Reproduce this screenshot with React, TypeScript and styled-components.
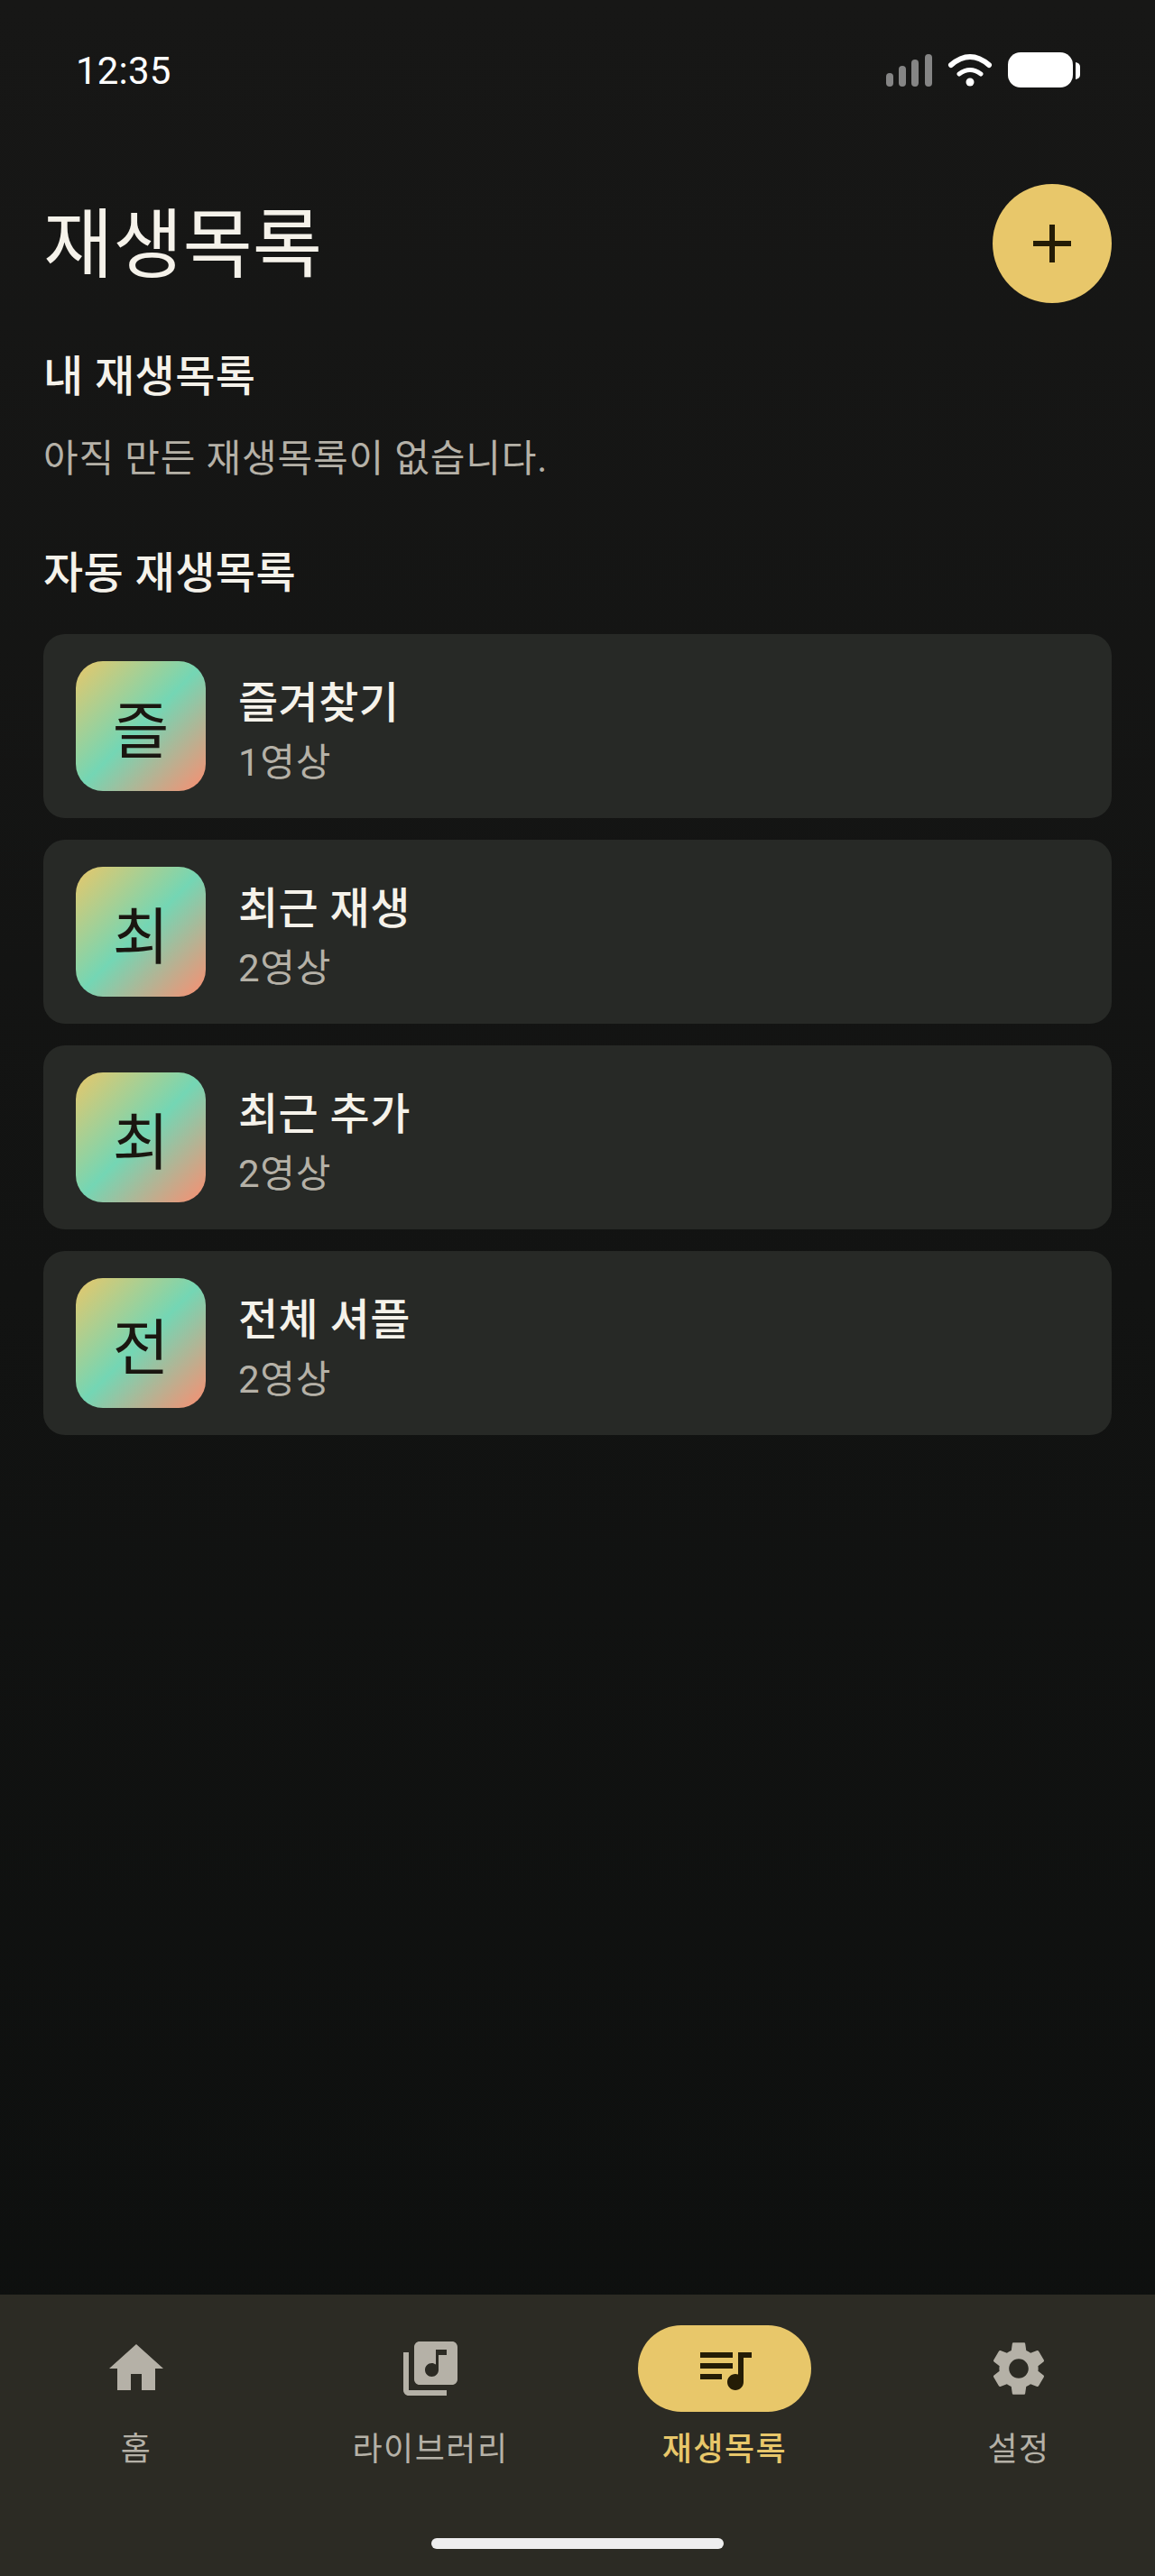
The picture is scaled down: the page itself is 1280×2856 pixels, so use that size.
import React from 'react'
import styled, { createGlobalStyle } from 'styled-components'

const GlobalStyle = createGlobalStyle`
    html, body {
        margin: 0;
        padding: 0;
        background: #111211;
    }
    body {
        font-family: Roboto, "Noto Sans CJK KR", sans-serif;
    }
`

const Page = styled.div`
    display: flex;
    flex-direction: column;
    width: 1280px;
    height: 2856px;
    background: linear-gradient(180deg, #171716 0%, #0d0f0e 100%);
    color: #f5f2ea;
`

const StatusBar = styled.div`
    display: flex;
    align-items: center;
    justify-content: space-between;
    height: 156px;
    padding: 0 84px;
    box-sizing: border-box;
`

const Time = styled.span`
    font-size: 42px;
    color: #ffffff;
    letter-spacing: 0.2px;
`

const StatusIcons = styled.svg`
    display: block;
    margin-right: -1px;
`

const Main = styled.main`
    flex: 1;
    padding: 48px 48px 0;
`

const Header = styled.div`
    display: flex;
    align-items: center;
    justify-content: space-between;
    height: 132px;
`

const Title = styled.h1`
    margin: 0;
    padding-top: 6px;
    font-size: 84px;
    font-weight: 400;
    line-height: 1;
`

const AddButton = styled.button`
    display: flex;
    align-items: center;
    justify-content: center;
    width: 132px;
    height: 132px;
    padding: 0;
    border: 0;
    border-radius: 50%;
    background: #e8c76a;
    color: #241c06;
`

const SectionTitle = styled.h2`
    margin: 0;
    font-size: 48px;
    font-weight: 500;
    line-height: 72px;
    letter-spacing: 0.45px;
`

const MineTitle = styled(SectionTitle)`
    margin-top: 46px;
`

const AutoTitle = styled(SectionTitle)`
    margin-top: 61px;
`

const Empty = styled.p`
    margin: 25px 0 0;
    font-size: 42px;
    line-height: 60px;
    letter-spacing: 0.85px;
    color: #b5b1a7;
`

const List = styled.div`
    display: flex;
    flex-direction: column;
    gap: 24px;
    margin-top: 31px;
`

const Card = styled.div`
    display: flex;
    align-items: center;
    gap: 36px;
    height: 204px;
    padding: 0 36px;
    border-radius: 24px;
    background: #272926;
`

const Avatar = styled.div`
    display: flex;
    align-items: center;
    justify-content: center;
    width: 144px;
    height: 144px;
    border-radius: 30px;
    background: linear-gradient(135deg, #e8c76a 0%, #74d6b4 50%, #fb8d70 100%);
    color: #1a1610;
    font-size: 68px;
`

const CardText = styled.div`
    display: flex;
    flex-direction: column;
    gap: 6px;
    padding-top: 14px;
`

const CardTitle = styled.div`
    font-size: 48px;
    font-weight: 500;
    line-height: 62px;
    letter-spacing: 0.45px;
`

const CardSub = styled.div`
    font-size: 42px;
    line-height: 58px;
    letter-spacing: 0.75px;
    color: #b5b1a7;
`

const BottomNav = styled.nav`
    position: relative;
    display: flex;
    justify-content: space-between;
    height: 312px;
    padding: 34px 55px 0;
    box-sizing: border-box;
    background: #2c2b24;
`

const Tab = styled.div`
    display: flex;
    flex-direction: column;
    align-items: center;
    width: 192px;
`

const IconPill = styled.div<{ $active?: boolean }>`
    display: flex;
    align-items: center;
    justify-content: center;
    width: 192px;
    height: 96px;
    border-radius: 48px;
    background: ${p => (p.$active ? '#e8c76a' : 'transparent')};
    color: ${p => (p.$active ? '#241c06' : '#b5b1a7')};
`

const TabLabel = styled.span<{ $active?: boolean }>`
    margin-top: 16px;
    font-size: 36px;
    line-height: 52px;
    letter-spacing: 1.5px;
    white-space: nowrap;
    font-weight: ${p => (p.$active ? 500 : 400)};
    color: ${p => (p.$active ? '#e8c76a' : '#b5b1a7')};
`

const HomeBar = styled.div`
    position: absolute;
    left: 478px;
    bottom: 30px;
    width: 324px;
    height: 12px;
    border-radius: 6px;
    background: #eeeeee;
`

const paths = {
    plus: 'M19 13h-6v6h-2v-6H5v-2h6V5h2v6h6v2z',
    home: 'M10 20v-6h4v6h5v-8h3L12 3 2 12h3v8z',
    library: 'M20 2H8c-1.1 0-2 .9-2 2v12c0 1.1.9 2 2 2h12c1.1 0 2-.9 2-2V4c0-1.1-.9-2-2-2zm-2 5h-3v5.5c0 1.38-1.12 2.5-2.5 2.5S10 13.88 10 12.5s1.12-2.5 2.5-2.5c.57 0 1.08.19 1.5.51V5h4v2zM4 6H2v14c0 1.1.9 2 2 2h14v-2H4V6z',
    queue: 'M15 6H3v2h12V6zm0 4H3v2h12v-2zM3 16h8v-2H3v2zM17 6v8.18c-.31-.11-.65-.18-1-.18-1.66 0-3 1.34-3 3s1.34 3 3 3 3-1.34 3-3V8h3V6h-5z',
    settings: 'M19.14 12.94c.04-.3.06-.61.06-.94 0-.32-.02-.64-.07-.94l2.03-1.58c.18-.14.23-.41.12-.61l-1.92-3.32c-.12-.22-.37-.29-.59-.22l-2.39.96c-.5-.38-1.03-.7-1.62-.94l-.36-2.54c-.04-.24-.24-.41-.48-.41h-3.84c-.24 0-.43.17-.47.41l-.36 2.54c-.59.24-1.13.57-1.62.94l-2.39-.96c-.22-.08-.47 0-.59.22L2.74 8.87c-.12.21-.08.47.12.61l2.03 1.58c-.05.3-.09.63-.09.94s.02.64.07.94l-2.03 1.58c-.18.14-.23.41-.12.61l1.92 3.32c.12.22.37.29.59.22l2.39-.96c.5.38 1.03.7 1.62.94l.36 2.54c.05.24.24.41.48.41h3.84c.24 0 .44-.17.47-.41l.36-2.54c.59-.24 1.13-.56 1.62-.94l2.39.96c.22.08.47 0 .59-.22l1.92-3.32c.12-.22.07-.47-.12-.61l-2.01-1.58zM12 15.6c-1.98 0-3.6-1.62-3.6-3.6s1.62-3.6 3.6-3.6 3.6 1.62 3.6 3.6-1.62 3.6-3.6 3.6z',
}

const Icon = ({ d, size = 72 }: { d: string, size?: number }) => (
    <svg width={size} height={size} viewBox="0 0 24 24" fill="currentColor">
        <path d={d} />
    </svg>
)

const playlists = [
    { name: '즐겨찾기', initial: '즐', count: '1영상' },
    { name: '최근 재생', initial: '최', count: '2영상' },
    { name: '최근 추가', initial: '최', count: '2영상' },
    { name: '전체 셔플', initial: '전', count: '2영상' },
]

const tabs = [
    { label: '홈', icon: paths.home },
    { label: '라이브러리', icon: paths.library },
    { label: '재생목록', icon: paths.queue, active: true },
    { label: '설정', icon: paths.settings },
]

const App = () => (
    <Page>
        <GlobalStyle />
        <StatusBar>
            <Time>12:35</Time>
            <StatusIcons width="215" height="40" viewBox="981 58 215 40">
                <g fill="#858585">
                    <rect x="981" y="81" width="8" height="15" rx="4" />
                    <rect x="995" y="73" width="8" height="23" rx="4" />
                    <rect x="1009" y="66" width="8" height="30" rx="4" />
                    <rect x="1024" y="60" width="8" height="36" rx="4" />
                </g>
                <g fill="none" stroke="#ffffff" strokeLinecap="round">
                    <path d="M1053 72 Q1074 54 1095 72" strokeWidth="6" />
                    <path d="M1062 82 Q1074 73 1086 82" strokeWidth="5" />
                </g>
                <circle cx="1074" cy="91" r="4.5" fill="#ffffff" />
                <rect x="1116" y="58" width="72" height="39" rx="14" fill="#ffffff" />
                <path d="M1191 69 q5 1 5 5 v9 q0 4 -5 5 z" fill="#ffffff" />
            </StatusIcons>
        </StatusBar>
        <Main>
            <Header>
                <Title>재생목록</Title>
                <AddButton>
                    <Icon d={paths.plus} size={72} />
                </AddButton>
            </Header>
            <MineTitle>내 재생목록</MineTitle>
            <Empty>아직 만든 재생목록이 없습니다.</Empty>
            <AutoTitle>자동 재생목록</AutoTitle>
            <List>
                {playlists.map(item => (
                    <Card key={item.name}>
                        <Avatar>{item.initial}</Avatar>
                        <CardText>
                            <CardTitle>{item.name}</CardTitle>
                            <CardSub>{item.count}</CardSub>
                        </CardText>
                    </Card>
                ))}
            </List>
        </Main>
        <BottomNav>
            {tabs.map(tab => (
                <Tab key={tab.label}>
                    <IconPill $active={tab.active}>
                        <Icon d={tab.icon} />
                    </IconPill>
                    <TabLabel $active={tab.active}>{tab.label}</TabLabel>
                </Tab>
            ))}
            <HomeBar />
        </BottomNav>
    </Page>
)

export default App
